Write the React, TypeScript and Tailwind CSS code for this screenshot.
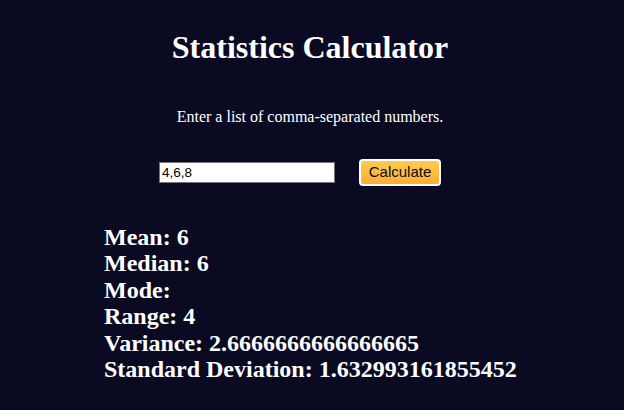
import { useState } from 'react';

function calc(values: number[]) {
  const n = values.length;
  const mean = values.reduce((a, b) => a + b, 0) / n;
  const sorted = [...values].sort((a, b) => a - b);
  const median = n % 2 ? sorted[(n - 1) / 2] : (sorted[n / 2 - 1] + sorted[n / 2]) / 2;
  const counts: Record<number, number> = {};
  values.forEach((v) => (counts[v] = (counts[v] || 0) + 1));
  const max = Math.max(...Object.values(counts));
  const mode = max > 1 ? Object.keys(counts).filter((k) => counts[+k] === max).join(', ') : '';
  const range = sorted[n - 1] - sorted[0];
  const variance = values.reduce((a, v) => a + (v - mean) ** 2, 0) / n;
  return { mean, median, mode, range, variance, sd: Math.sqrt(variance) };
}

export default function App() {
  const [input, setInput] = useState('4,6,8');
  const [stats, setStats] = useState(() => calc([4, 6, 8]));

  const run = () => {
    const nums = input.split(',').map((s) => parseFloat(s.trim())).filter((v) => !isNaN(v));
    if (nums.length) setStats(calc(nums));
  };

  return (
    <div className="min-h-[410px] w-full bg-[#0a0a23] text-white font-['Liberation_Serif',serif]">
      <div className="pt-[29px] pr-[4px] text-center">
        <h1 className="text-[32px] font-bold leading-[37px]">Statistics Calculator</h1>
        <p className="mt-[41px] text-[16px] leading-[19px]">Enter a list of comma-separated numbers.</p>
      </div>

      {/* input row */}
      <div className="mt-[33px] flex items-center pl-[159px] gap-[24px]">
        <input
          value={input}
          onChange={(e) => setInput(e.target.value)}
          className="w-[176px] h-[21px] bg-white text-black border border-[#767676] px-[2px] text-[13.5px] font-['Liberation_Sans',sans-serif] outline-none"
        />
        <button
          onClick={run}
          className="h-[27px] w-[82px] rounded-[4px] border-2 border-white bg-gradient-to-b from-[#fecc4c] to-[#ffac33] text-[#0a0a23] text-[15px] font-['Liberation_Sans',sans-serif]"
        >
          Calculate
        </button>
      </div>

      <div className="mt-[38px] pl-[104px] text-[24px] font-bold leading-[26.4px]">
        <div>Mean: {stats.mean}</div>
        <div>Median: {stats.median}</div>
        <div>Mode: {stats.mode}</div>
        <div>Range: {stats.range}</div>
        <div>Variance: {stats.variance}</div>
        <div>Standard Deviation: {stats.sd}</div>
      </div>
    </div>
  );
}
